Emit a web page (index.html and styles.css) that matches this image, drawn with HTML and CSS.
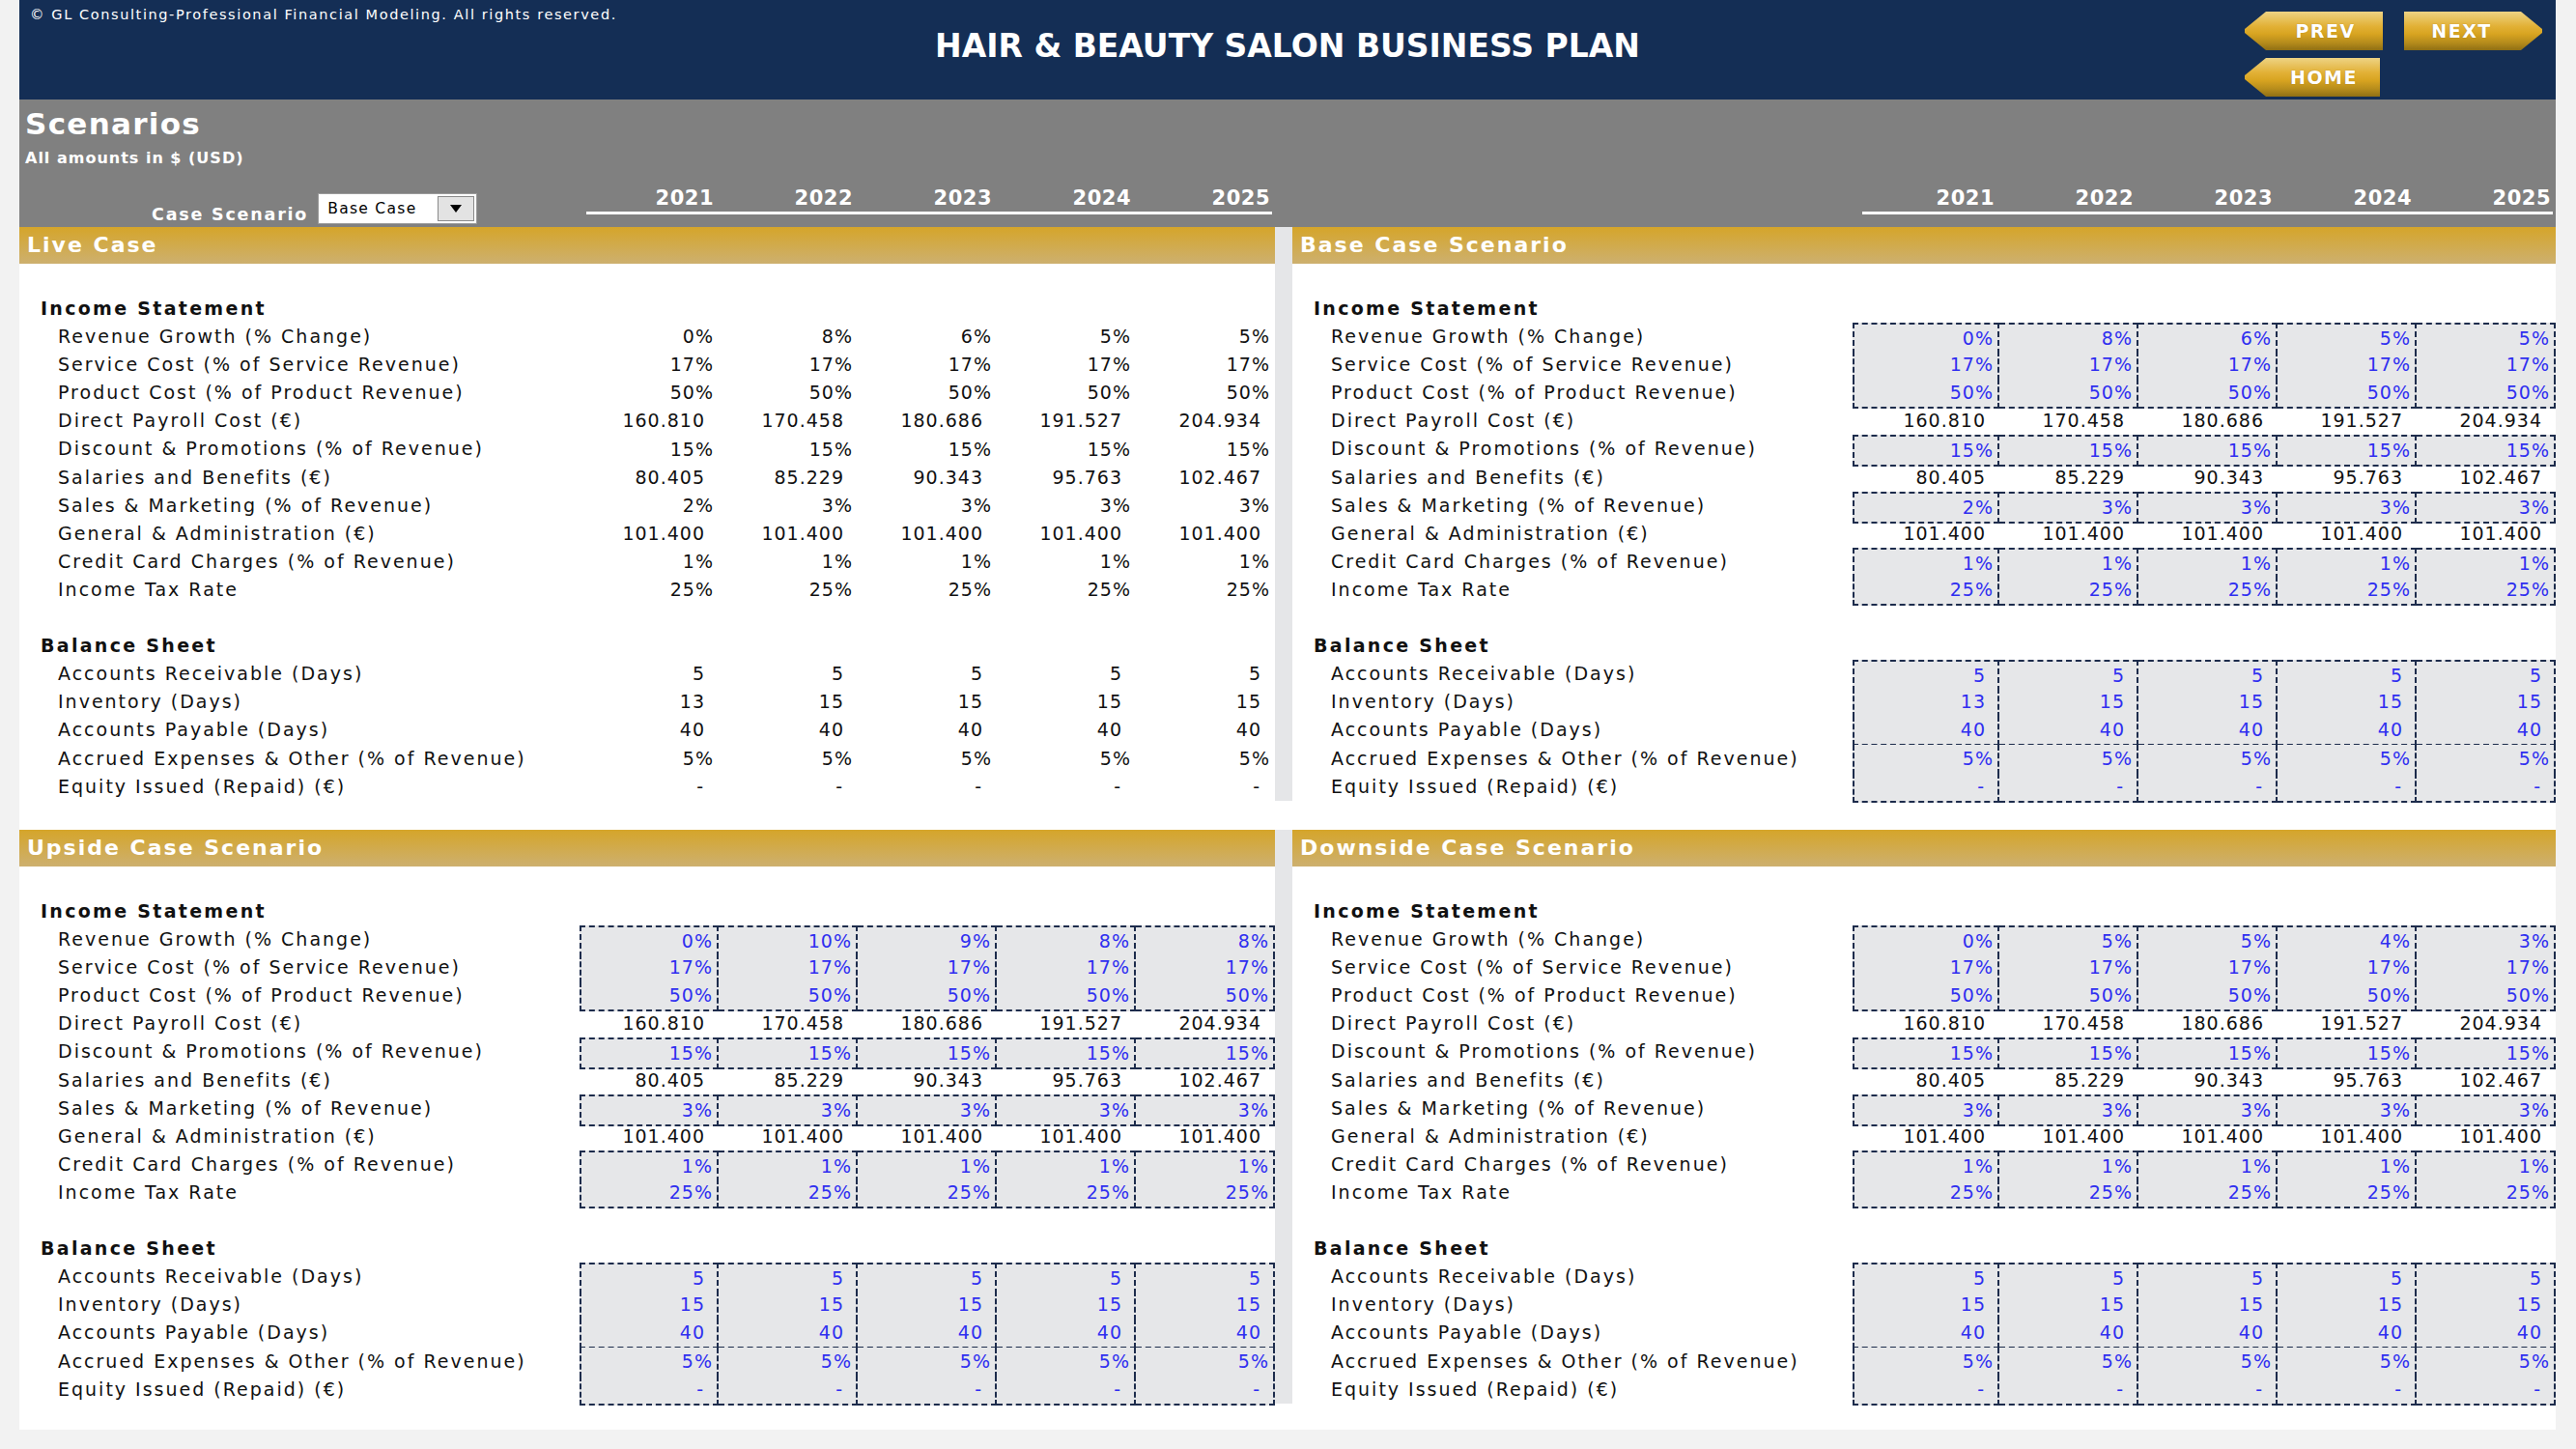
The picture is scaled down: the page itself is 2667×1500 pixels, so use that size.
FILE: index.html
```html
<!DOCTYPE html>
<html lang="en">
<head>
<meta charset="utf-8">
<title>Hair &amp; Beauty Salon Business Plan - Scenarios</title>
<link rel="stylesheet" href="styles.css">
</head>
<body>
<div class="page">
  <header class="top">
    <div class="copy">© GL Consulting-Professional Financial Modeling. All rights reserved.</div>
    <div class="title">HAIR &amp; BEAUTY SALON BUSINESS PLAN</div>
    <nav class="nav">
      <a class="btn bl">PREV</a>
      <a class="btn br">NEXT</a>
      <a class="btn bl home">HOME</a>
    </nav>
  </header>

  <section class="sh">
    <h1>Scenarios</h1>
    <div class="sub">All amounts in $ (USD)</div>
    <div class="case">
      <div class="yl">
        <div class="cs">
          <span class="cslabel">Case Scenario</span>
          <div class="dd"><span>Base Case</span><i class="ddb"><svg width="12" height="8" viewBox="0 0 12 8"><path d="M0 0h12L6 8z" fill="#000"/></svg></i></div>
        </div>
        <div class="yrs"><span>2021</span><span>2022</span><span>2023</span><span>2024</span><span>2025</span></div>
      </div>
      <div class="yl yrt">
        <div></div>
        <div class="yrs"><span>2021</span><span>2022</span><span>2023</span><span>2024</span><span>2025</span></div>
      </div>
    </div>
  </section>

  <main class="grid">
    <!-- Live Case -->
    <section class="panel left">
      <div class="band">Live Case</div>
      <div class="body">
        <div class="r hd"><span class="lb">Income Statement</span></div>
        <div class="r"><span class="lb">Revenue Growth (% Change)</span><span class="v p">0%</span><span class="v p">8%</span><span class="v p">6%</span><span class="v p">5%</span><span class="v p">5%</span></div>
        <div class="r"><span class="lb">Service Cost (% of Service Revenue)</span><span class="v p">17%</span><span class="v p">17%</span><span class="v p">17%</span><span class="v p">17%</span><span class="v p">17%</span></div>
        <div class="r"><span class="lb">Product Cost (% of Product Revenue)</span><span class="v p">50%</span><span class="v p">50%</span><span class="v p">50%</span><span class="v p">50%</span><span class="v p">50%</span></div>
        <div class="r"><span class="lb">Direct Payroll Cost (€)</span><span class="v n">160.810</span><span class="v n">170.458</span><span class="v n">180.686</span><span class="v n">191.527</span><span class="v n">204.934</span></div>
        <div class="r"><span class="lb">Discount &amp; Promotions (% of Revenue)</span><span class="v p">15%</span><span class="v p">15%</span><span class="v p">15%</span><span class="v p">15%</span><span class="v p">15%</span></div>
        <div class="r"><span class="lb">Salaries and Benefits (€)</span><span class="v n">80.405</span><span class="v n">85.229</span><span class="v n">90.343</span><span class="v n">95.763</span><span class="v n">102.467</span></div>
        <div class="r"><span class="lb">Sales &amp; Marketing (% of Revenue)</span><span class="v p">2%</span><span class="v p">3%</span><span class="v p">3%</span><span class="v p">3%</span><span class="v p">3%</span></div>
        <div class="r"><span class="lb">General &amp; Administration (€)</span><span class="v n">101.400</span><span class="v n">101.400</span><span class="v n">101.400</span><span class="v n">101.400</span><span class="v n">101.400</span></div>
        <div class="r"><span class="lb">Credit Card Charges (% of Revenue)</span><span class="v p">1%</span><span class="v p">1%</span><span class="v p">1%</span><span class="v p">1%</span><span class="v p">1%</span></div>
        <div class="r"><span class="lb">Income Tax Rate</span><span class="v p">25%</span><span class="v p">25%</span><span class="v p">25%</span><span class="v p">25%</span><span class="v p">25%</span></div>
        <div class="r"></div>
        <div class="r hd"><span class="lb">Balance Sheet</span></div>
        <div class="r"><span class="lb">Accounts Receivable (Days)</span><span class="v n">5</span><span class="v n">5</span><span class="v n">5</span><span class="v n">5</span><span class="v n">5</span></div>
        <div class="r"><span class="lb">Inventory (Days)</span><span class="v n">13</span><span class="v n">15</span><span class="v n">15</span><span class="v n">15</span><span class="v n">15</span></div>
        <div class="r"><span class="lb">Accounts Payable (Days)</span><span class="v n">40</span><span class="v n">40</span><span class="v n">40</span><span class="v n">40</span><span class="v n">40</span></div>
        <div class="r"><span class="lb">Accrued Expenses &amp; Other (% of Revenue)</span><span class="v p">5%</span><span class="v p">5%</span><span class="v p">5%</span><span class="v p">5%</span><span class="v p">5%</span></div>
        <div class="r"><span class="lb">Equity Issued (Repaid) (€)</span><span class="v d">-</span><span class="v d">-</span><span class="v d">-</span><span class="v d">-</span><span class="v d">-</span></div>
      </div>
    </section>

    <!-- Base Case -->
    <section class="panel right">
      <div class="band">Base Case Scenario</div>
      <div class="body">
        <div class="r hd"><span class="lb">Income Statement</span></div>
        <div class="r in gt"><span class="lb">Revenue Growth (% Change)</span><span class="v p">0%</span><span class="v p">8%</span><span class="v p">6%</span><span class="v p">5%</span><span class="v p">5%</span></div>
        <div class="r in"><span class="lb">Service Cost (% of Service Revenue)</span><span class="v p">17%</span><span class="v p">17%</span><span class="v p">17%</span><span class="v p">17%</span><span class="v p">17%</span></div>
        <div class="r in"><span class="lb">Product Cost (% of Product Revenue)</span><span class="v p">50%</span><span class="v p">50%</span><span class="v p">50%</span><span class="v p">50%</span><span class="v p">50%</span></div>
        <div class="r"><span class="lb">Direct Payroll Cost (€)</span><span class="v n">160.810</span><span class="v n">170.458</span><span class="v n">180.686</span><span class="v n">191.527</span><span class="v n">204.934</span></div>
        <div class="r in gt"><span class="lb">Discount &amp; Promotions (% of Revenue)</span><span class="v p">15%</span><span class="v p">15%</span><span class="v p">15%</span><span class="v p">15%</span><span class="v p">15%</span></div>
        <div class="r"><span class="lb">Salaries and Benefits (€)</span><span class="v n">80.405</span><span class="v n">85.229</span><span class="v n">90.343</span><span class="v n">95.763</span><span class="v n">102.467</span></div>
        <div class="r in gt"><span class="lb">Sales &amp; Marketing (% of Revenue)</span><span class="v p">2%</span><span class="v p">3%</span><span class="v p">3%</span><span class="v p">3%</span><span class="v p">3%</span></div>
        <div class="r"><span class="lb">General &amp; Administration (€)</span><span class="v n">101.400</span><span class="v n">101.400</span><span class="v n">101.400</span><span class="v n">101.400</span><span class="v n">101.400</span></div>
        <div class="r in gt"><span class="lb">Credit Card Charges (% of Revenue)</span><span class="v p">1%</span><span class="v p">1%</span><span class="v p">1%</span><span class="v p">1%</span><span class="v p">1%</span></div>
        <div class="r in"><span class="lb">Income Tax Rate</span><span class="v p">25%</span><span class="v p">25%</span><span class="v p">25%</span><span class="v p">25%</span><span class="v p">25%</span></div>
        <div class="r"></div>
        <div class="r hd"><span class="lb">Balance Sheet</span></div>
        <div class="r in gt"><span class="lb">Accounts Receivable (Days)</span><span class="v n">5</span><span class="v n">5</span><span class="v n">5</span><span class="v n">5</span><span class="v n">5</span></div>
        <div class="r in"><span class="lb">Inventory (Days)</span><span class="v n">13</span><span class="v n">15</span><span class="v n">15</span><span class="v n">15</span><span class="v n">15</span></div>
        <div class="r in"><span class="lb">Accounts Payable (Days)</span><span class="v n">40</span><span class="v n">40</span><span class="v n">40</span><span class="v n">40</span><span class="v n">40</span></div>
        <div class="r in"><span class="lb">Accrued Expenses &amp; Other (% of Revenue)</span><span class="v p">5%</span><span class="v p">5%</span><span class="v p">5%</span><span class="v p">5%</span><span class="v p">5%</span></div>
        <div class="r in"><span class="lb">Equity Issued (Repaid) (€)</span><span class="v d">-</span><span class="v d">-</span><span class="v d">-</span><span class="v d">-</span><span class="v d">-</span></div>
      </div>
    </section>

    <!-- Upside Case -->
    <section class="panel left">
      <div class="band">Upside Case Scenario</div>
      <div class="body">
        <div class="r hd"><span class="lb">Income Statement</span></div>
        <div class="r in gt"><span class="lb">Revenue Growth (% Change)</span><span class="v p">0%</span><span class="v p">10%</span><span class="v p">9%</span><span class="v p">8%</span><span class="v p">8%</span></div>
        <div class="r in"><span class="lb">Service Cost (% of Service Revenue)</span><span class="v p">17%</span><span class="v p">17%</span><span class="v p">17%</span><span class="v p">17%</span><span class="v p">17%</span></div>
        <div class="r in"><span class="lb">Product Cost (% of Product Revenue)</span><span class="v p">50%</span><span class="v p">50%</span><span class="v p">50%</span><span class="v p">50%</span><span class="v p">50%</span></div>
        <div class="r"><span class="lb">Direct Payroll Cost (€)</span><span class="v n">160.810</span><span class="v n">170.458</span><span class="v n">180.686</span><span class="v n">191.527</span><span class="v n">204.934</span></div>
        <div class="r in gt"><span class="lb">Discount &amp; Promotions (% of Revenue)</span><span class="v p">15%</span><span class="v p">15%</span><span class="v p">15%</span><span class="v p">15%</span><span class="v p">15%</span></div>
        <div class="r"><span class="lb">Salaries and Benefits (€)</span><span class="v n">80.405</span><span class="v n">85.229</span><span class="v n">90.343</span><span class="v n">95.763</span><span class="v n">102.467</span></div>
        <div class="r in gt"><span class="lb">Sales &amp; Marketing (% of Revenue)</span><span class="v p">3%</span><span class="v p">3%</span><span class="v p">3%</span><span class="v p">3%</span><span class="v p">3%</span></div>
        <div class="r"><span class="lb">General &amp; Administration (€)</span><span class="v n">101.400</span><span class="v n">101.400</span><span class="v n">101.400</span><span class="v n">101.400</span><span class="v n">101.400</span></div>
        <div class="r in gt"><span class="lb">Credit Card Charges (% of Revenue)</span><span class="v p">1%</span><span class="v p">1%</span><span class="v p">1%</span><span class="v p">1%</span><span class="v p">1%</span></div>
        <div class="r in"><span class="lb">Income Tax Rate</span><span class="v p">25%</span><span class="v p">25%</span><span class="v p">25%</span><span class="v p">25%</span><span class="v p">25%</span></div>
        <div class="r"></div>
        <div class="r hd"><span class="lb">Balance Sheet</span></div>
        <div class="r in gt"><span class="lb">Accounts Receivable (Days)</span><span class="v n">5</span><span class="v n">5</span><span class="v n">5</span><span class="v n">5</span><span class="v n">5</span></div>
        <div class="r in"><span class="lb">Inventory (Days)</span><span class="v n">15</span><span class="v n">15</span><span class="v n">15</span><span class="v n">15</span><span class="v n">15</span></div>
        <div class="r in"><span class="lb">Accounts Payable (Days)</span><span class="v n">40</span><span class="v n">40</span><span class="v n">40</span><span class="v n">40</span><span class="v n">40</span></div>
        <div class="r in"><span class="lb">Accrued Expenses &amp; Other (% of Revenue)</span><span class="v p">5%</span><span class="v p">5%</span><span class="v p">5%</span><span class="v p">5%</span><span class="v p">5%</span></div>
        <div class="r in"><span class="lb">Equity Issued (Repaid) (€)</span><span class="v d">-</span><span class="v d">-</span><span class="v d">-</span><span class="v d">-</span><span class="v d">-</span></div>
      </div>
    </section>

    <!-- Downside Case -->
    <section class="panel right">
      <div class="band">Downside Case Scenario</div>
      <div class="body">
        <div class="r hd"><span class="lb">Income Statement</span></div>
        <div class="r in gt"><span class="lb">Revenue Growth (% Change)</span><span class="v p">0%</span><span class="v p">5%</span><span class="v p">5%</span><span class="v p">4%</span><span class="v p">3%</span></div>
        <div class="r in"><span class="lb">Service Cost (% of Service Revenue)</span><span class="v p">17%</span><span class="v p">17%</span><span class="v p">17%</span><span class="v p">17%</span><span class="v p">17%</span></div>
        <div class="r in"><span class="lb">Product Cost (% of Product Revenue)</span><span class="v p">50%</span><span class="v p">50%</span><span class="v p">50%</span><span class="v p">50%</span><span class="v p">50%</span></div>
        <div class="r"><span class="lb">Direct Payroll Cost (€)</span><span class="v n">160.810</span><span class="v n">170.458</span><span class="v n">180.686</span><span class="v n">191.527</span><span class="v n">204.934</span></div>
        <div class="r in gt"><span class="lb">Discount &amp; Promotions (% of Revenue)</span><span class="v p">15%</span><span class="v p">15%</span><span class="v p">15%</span><span class="v p">15%</span><span class="v p">15%</span></div>
        <div class="r"><span class="lb">Salaries and Benefits (€)</span><span class="v n">80.405</span><span class="v n">85.229</span><span class="v n">90.343</span><span class="v n">95.763</span><span class="v n">102.467</span></div>
        <div class="r in gt"><span class="lb">Sales &amp; Marketing (% of Revenue)</span><span class="v p">3%</span><span class="v p">3%</span><span class="v p">3%</span><span class="v p">3%</span><span class="v p">3%</span></div>
        <div class="r"><span class="lb">General &amp; Administration (€)</span><span class="v n">101.400</span><span class="v n">101.400</span><span class="v n">101.400</span><span class="v n">101.400</span><span class="v n">101.400</span></div>
        <div class="r in gt"><span class="lb">Credit Card Charges (% of Revenue)</span><span class="v p">1%</span><span class="v p">1%</span><span class="v p">1%</span><span class="v p">1%</span><span class="v p">1%</span></div>
        <div class="r in"><span class="lb">Income Tax Rate</span><span class="v p">25%</span><span class="v p">25%</span><span class="v p">25%</span><span class="v p">25%</span><span class="v p">25%</span></div>
        <div class="r"></div>
        <div class="r hd"><span class="lb">Balance Sheet</span></div>
        <div class="r in gt"><span class="lb">Accounts Receivable (Days)</span><span class="v n">5</span><span class="v n">5</span><span class="v n">5</span><span class="v n">5</span><span class="v n">5</span></div>
        <div class="r in"><span class="lb">Inventory (Days)</span><span class="v n">15</span><span class="v n">15</span><span class="v n">15</span><span class="v n">15</span><span class="v n">15</span></div>
        <div class="r in"><span class="lb">Accounts Payable (Days)</span><span class="v n">40</span><span class="v n">40</span><span class="v n">40</span><span class="v n">40</span><span class="v n">40</span></div>
        <div class="r in"><span class="lb">Accrued Expenses &amp; Other (% of Revenue)</span><span class="v p">5%</span><span class="v p">5%</span><span class="v p">5%</span><span class="v p">5%</span><span class="v p">5%</span></div>
        <div class="r in"><span class="lb">Equity Issued (Repaid) (€)</span><span class="v d">-</span><span class="v d">-</span><span class="v d">-</span><span class="v d">-</span><span class="v d">-</span></div>
      </div>
    </section>
  </main>
</div>
</body>
</html>
```

FILE: styles.css
```css
* { box-sizing: border-box; }

body {
  margin: 0;
  background: #f2f2f2;
  font-family: "DejaVu Sans", "Noto Sans", sans-serif;
  color: #111;
}

.page {
  width: 2626px;
  margin-left: 20px;
}

/* ---------- top navy header ---------- */
.top {
  height: 103px;
  background: #142e55;
  color: #fff;
  display: grid;
  grid-template-columns: 1fr auto 1fr;
}

.copy {
  font-size: 14.5px;
  letter-spacing: 1.6px;
  line-height: 20px;
  padding: 5px 0 0 11px;
  white-space: nowrap;
}

.title {
  font-weight: bold;
  font-size: 33px;
  line-height: 40px;
  padding-top: 28px;
  white-space: nowrap;
}

.nav {
  justify-self: end;
  display: grid;
  grid-template-columns: 143px 143px;
  column-gap: 22px;
  row-gap: 8px;
  padding: 12px 14px 0 0;
  align-content: start;
}

.btn {
  height: 40px;
  display: flex;
  align-items: center;
  justify-content: center;
  font-weight: bold;
  font-size: 19px;
  letter-spacing: 1.5px;
  color: #fff;
  text-shadow: 0 0 1px rgba(90, 60, 0, 0.5);
  background: linear-gradient(#eed384 0%, #e2b136 38%, #d8a420 58%, #b38a1b 82%, #8f6f14 100%);
}

.btn.bl {
  clip-path: polygon(22px 0, 100% 0, 100% 100%, 22px 100%, 0 55%, 0 45%);
  padding-left: 24px;
}

.btn.br {
  clip-path: polygon(0 0, calc(100% - 22px) 0, 100% 45%, 100% 55%, calc(100% - 22px) 100%, 0 100%);
  padding-right: 24px;
}

.btn.home {
  width: 140px;
}

/* ---------- grey scenarios band ---------- */
.sh {
  height: 132px;
  background: #808080;
  color: #fff;
  font-weight: bold;
  padding-top: 7.5px;
}

.sh h1 {
  margin: 0;
  font-size: 31px;
  line-height: 34px;
  letter-spacing: 1.3px;
  padding-left: 6px;
}

.sub {
  margin-top: 9px;
  font-size: 16px;
  line-height: 20px;
  letter-spacing: 1px;
  padding-left: 6px;
}

.case {
  margin-top: 19.5px;
  height: 42px;
  display: grid;
  grid-template-columns: 1318px 1308px;
}

.yl {
  display: grid;
  grid-template-columns: 580px 720px;
}

.yl.yrt {
  grid-template-columns: 580px 728px;
}

.cs {
  display: flex;
  align-items: flex-start;
  padding-left: 137px;
}

.cslabel {
  margin-top: 18px;
  font-size: 17.5px;
  line-height: 22px;
  letter-spacing: 1.8px;
  white-space: nowrap;
}

.dd {
  margin: 7px 0 0 10px;
  width: 165px;
  height: 32px;
  background: #fff;
  border: 1px solid #9a9a9a;
  display: flex;
  align-items: center;
  padding: 2px 2px 2px 9px;
  font-weight: normal;
  color: #000;
  font-size: 15.5px;
  letter-spacing: 1.3px;
}

.dd span {
  flex: 1;
  white-space: nowrap;
}

.ddb {
  width: 38px;
  height: 26px;
  background: #e3e3e3;
  border: 1px solid #8a8a8a;
  display: flex;
  align-items: center;
  justify-content: center;
}

.yrs {
  display: grid;
  grid-template-columns: repeat(5, 144px);
  height: 29px;
  background: linear-gradient(#fff, #fff) no-repeat;
  background-position: 7px 26px;
  background-size: calc(100% - 10px) 3px;
}

.yrt .yrs {
  grid-template-columns: 152px repeat(4, 144px);
  background-position: 10px 26px;
  background-size: calc(100% - 13px) 3px;
}

.yrs span {
  text-align: right;
  padding-right: 5px;
  font-size: 21px;
  line-height: 24px;
  letter-spacing: 0.5px;
}

/* ---------- panels ---------- */
.grid {
  display: grid;
  grid-template-columns: 1318px 1308px;
  grid-template-rows: 624px 621px;
  background: #fff;
}

.panel {
  background: #fff;
}

.band {
  height: 38px;
  background: linear-gradient(#d5a52a, #cdb06f);
  color: #fff;
  font-weight: bold;
  font-size: 22px;
  letter-spacing: 2px;
  line-height: 38px;
  padding-left: 8px;
  white-space: nowrap;
}

.panel.left .band,
.panel.left .body {
  border-right: 18px solid #e5e6e8;
}

.body {
  padding-top: 32px;
}

.r {
  display: grid;
  grid-template-columns: 580px repeat(5, 144px);
  height: 29.1px;
  font-size: 19px;
  line-height: 29px;
}

.right .r {
  grid-template-columns: 580px 152px repeat(4, 144px);
}

.lb {
  padding-left: 40px;
  letter-spacing: 2px;
  white-space: nowrap;
}

.hd .lb {
  padding-left: 22px;
  font-weight: bold;
  letter-spacing: 2.3px;
}

.v {
  display: flex;
  align-items: center;
  justify-content: flex-end;
  letter-spacing: 1px;
  white-space: nowrap;
}

.v.p { padding-right: 5px; }
.v.n { padding-right: 14px; }
.v.d { padding-right: 15px; }

.in .v {
  color: #2f2ff0;
  background: #e6e7e9;
  border-right: 2px dashed #1d2c4c;
  border-bottom: 2px dashed #1d2c4c;
}

.in .v:nth-child(2) {
  border-left: 2px dashed #1d2c4c;
}

.in.gt .v {
  border-top: 2px dashed #1d2c4c;
}

.in .v.p { padding-right: 4px; }
.in .v.n { padding-right: 12px; }
.in .v.d { padding-right: 13px; }
```
